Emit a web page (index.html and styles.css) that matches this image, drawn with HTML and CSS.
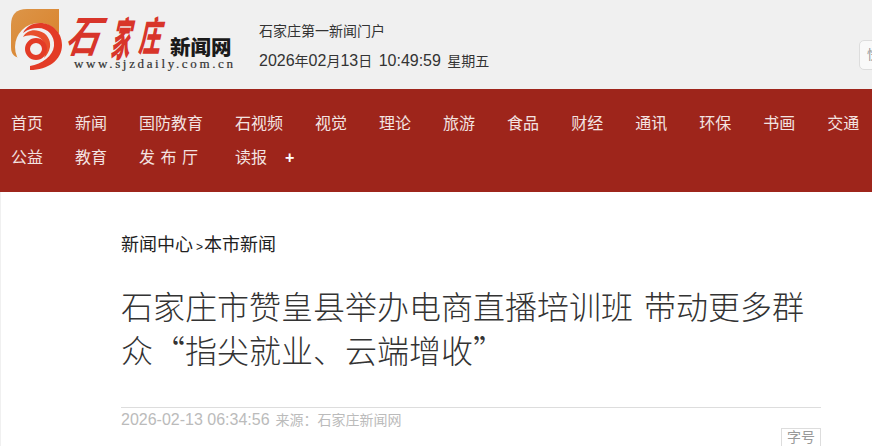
FILE: index.html
```html
<!DOCTYPE html>
<html lang="zh-CN">
<head>
  <meta charset="UTF-8">
  <title>石家庄市赞皇县举办电商直播培训班</title>
  <link rel="stylesheet" href="styles.css">
</head>
<body>

  <div class="top">
    <svg class="logo" width="259" height="89" viewBox="0 0 259 89">
      <defs>
        <linearGradient id="orange" x1="0" y1="0" x2="1" y2="1">
          <stop offset="0" stop-color="#dc9548"/>
          <stop offset="1" stop-color="#d9812a"/>
        </linearGradient>
      </defs>
      <path d="M27 9H59V58H22Q11 58 11 47V25Q11 9 27 9Z" fill="url(#orange)"/>
      <circle cx="39" cy="47" r="24" fill="#f0f0f0"/>
      <path d="M30 70C48 70 62 60 62 45C62 32 52 23 40 23C32 23 26 27 23 33C28 29 33 28 38 28C48 28 55 36 54 46C53 56 42 64 30 66Z" fill="#e33b26"/>
      <path d="M23 37C26 31 33 29 39 31C47 33 51 40 50 47C49 52 47 55 44 58C47 50 46 42 40 38C34 34 27 35 23 37Z" fill="#e8502c"/>
      <circle cx="36" cy="49" r="8.5" fill="none" stroke="#e33b26" stroke-width="5"/>
      <text class="logo-name" transform="translate(64 52) skewX(-20) scale(0.88 1.15)">石</text>
      <text class="logo-name logo-heavy" transform="translate(110 56) skewX(-12) scale(0.5 1.2)">家</text>
      <text class="logo-name logo-heavy" transform="translate(138 51) skewX(-12) scale(0.58 1.05)">庄</text>
      <text class="logo-sub" x="170" y="55">新闻网</text>
      <text class="logo-url" x="74" y="68" textLength="159">www.sjzdaily.com.cn</text>
    </svg>

    <div class="top-info">
      <p>石家庄第一新闻门户</p>
      <p class="clock">2026<span class="cn">年</span>02<span class="cn">月</span>13<span class="cn">日</span> 10:49:59 <span class="cn">星期五</span></p>
    </div>

    <div class="search">快</div>
  </div>

  <ul class="nav">
    <li>首页</li>
    <li>新闻</li>
    <li>国防教育</li>
    <li>石视频</li>
    <li>视觉</li>
    <li>理论</li>
    <li>旅游</li>
    <li>食品</li>
    <li>财经</li>
    <li>通讯</li>
    <li>环保</li>
    <li>书画</li>
    <li>交通</li>
    <li>公益</li>
    <li>教育</li>
    <li class="spaced">发 布 厅</li>
    <li>读报</li>
    <li class="more">+</li>
  </ul>

  <div class="article">
    <div class="crumb">新闻中心<span class="gt">&gt;</span>本市新闻</div>
    <h1>石家庄市赞皇县举办电商直播培训班 带动更多群众“指尖就业、云端增收”</h1>
    <div class="meta">
      <span class="num">2026-02-13 06:34:56</span> 来源：石家庄新闻网
    </div>
    <div class="tools">
      <span class="fontsize">字号</span>
    </div>
  </div>

</body>
</html>
```

FILE: styles.css
```css
* {
  box-sizing: border-box;
}

html,
body {
  height: 446px;
  overflow: hidden;
}

body {
  margin: 0;
  background: #f0f0f0;
  font-family: "Liberation Sans", "Noto Sans CJK SC", sans-serif;
  color: #333;
}

.top {
  display: flex;
  align-items: center;
  height: 89px;
}

.logo {
  display: block;
  flex-shrink: 0;
}

.logo-name {
  font-family: "Noto Sans CJK SC", sans-serif;
  font-weight: 700;
  font-size: 38px;
  fill: #d8352a;
}

.logo-heavy {
  font-weight: 900;
}

.logo-sub {
  font-family: "Noto Sans CJK SC", sans-serif;
  font-weight: 900;
  font-size: 20.5px;
  fill: #1a1a1a;
}

.logo-url {
  font-family: "Liberation Serif", serif;
  font-size: 13px;
  stroke: #333;
  stroke-width: 0.2;
  fill: #333;
}

.top-info {
  flex-shrink: 0;
  width: 600px;
  padding-top: 4px;
  font-size: 14px;
  line-height: 29px;
}

.top-info p {
  margin: 0;
}

.clock {
  font-size: 16px;
  word-spacing: 2px;
}

.cn {
  font-size: 14px;
}

.search {
  flex-shrink: 0;
  width: 200px;
  height: 30px;
  margin-top: 20px;
  padding-left: 7px;
  background: #f9f9f9;
  border: 1px solid #ddd;
  border-radius: 5px;
  font-size: 13px;
  line-height: 28px;
  color: #999;
}

.nav {
  display: flex;
  flex-wrap: wrap;
  align-content: flex-start;
  column-gap: 32px;
  height: 103px;
  margin: 0;
  padding: 18px 0 0 11px;
  background: #9e251b;
  list-style: none;
  font-size: 16px;
  line-height: 34px;
  color: #f3e3e1;
}

.spaced {
  padding-right: 5px;
  word-spacing: 1px;
}

.more {
  margin-left: -14px;
  font-weight: 700;
  color: #fff;
}

.article {
  height: 254px;
  margin-left: 1px;
  padding: 37px 51px 0 120px;
  background: #fff;
}

.crumb {
  font-size: 18px;
  line-height: 32px;
  color: #222;
}

.gt {
  margin: 0 1px 0 3px;
  font-size: 12px;
}

h1 {
  margin: 20px 0 0;
  font-family: "Noto Sans CJK SC", sans-serif;
  font-size: 32px;
  font-weight: 300;
  line-height: 44px;
  word-spacing: 4px;
  color: #333;
}

.meta {
  margin-top: 36px;
  border-top: 1px solid #ddd;
  font-size: 14px;
  line-height: 24px;
  color: #bbb;
}

.num {
  margin-right: 2px;
  font-size: 16px;
}

.tools {
  display: flex;
  justify-content: flex-end;
  margin-top: -4px;
}

.fontsize {
  width: 40px;
  height: 24px;
  border: 1px solid #ddd;
  font-size: 14px;
  line-height: 16px;
  text-align: center;
  color: #999;
}
```
